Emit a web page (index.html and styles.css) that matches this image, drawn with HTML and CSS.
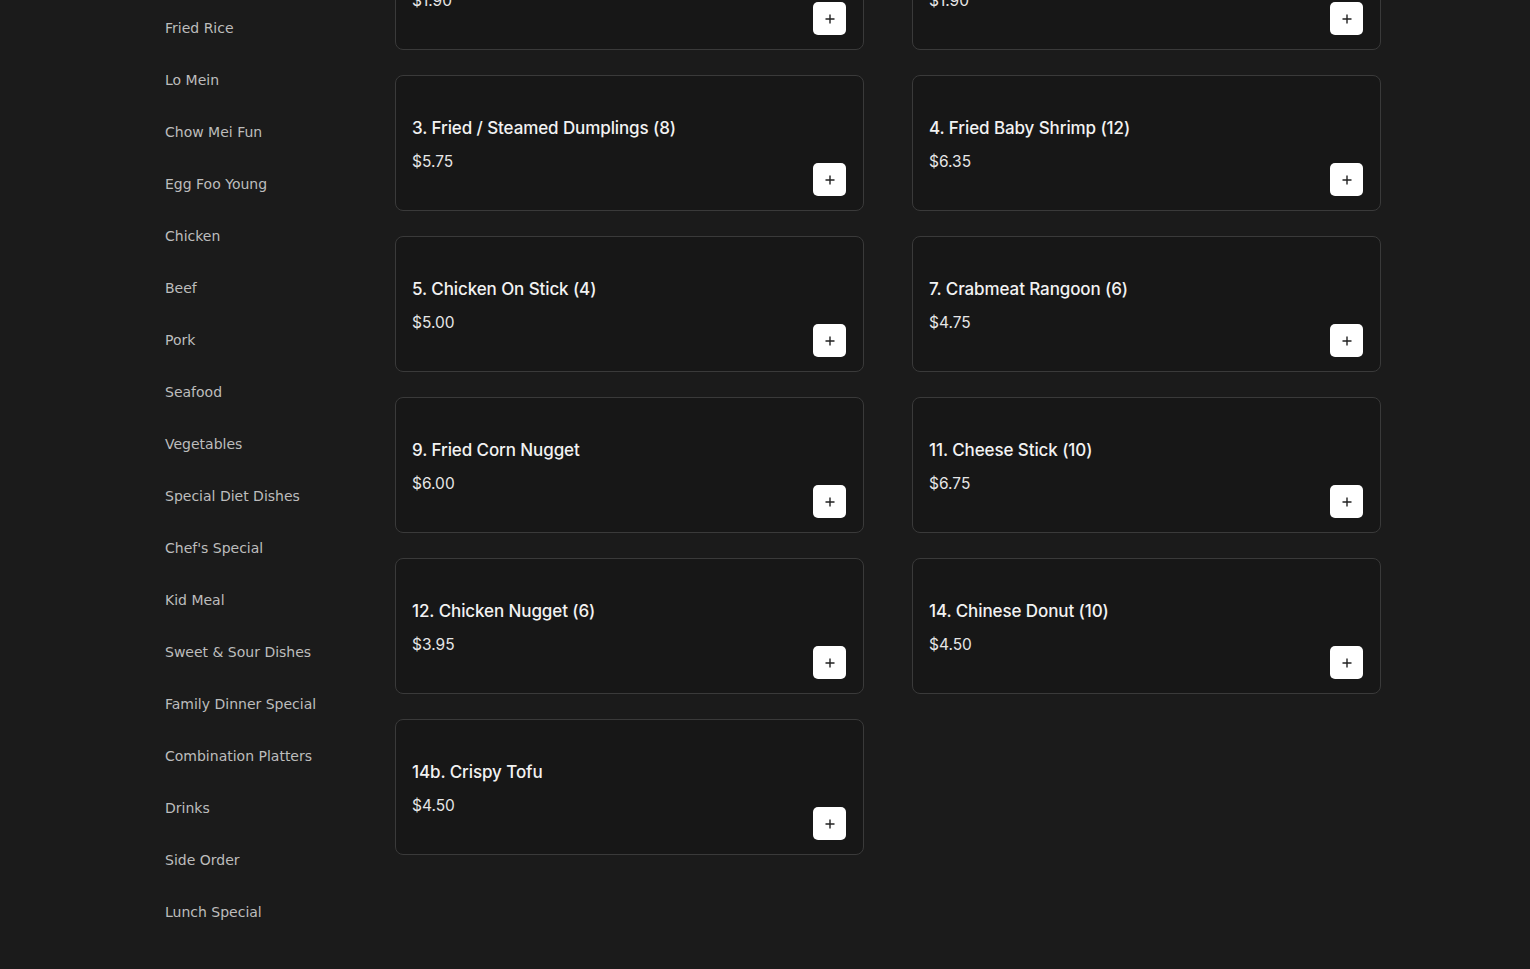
FILE: index.html
```html
<!DOCTYPE html>
<html lang="en">
<head>
  <meta charset="UTF-8">
  <meta name="viewport" content="width=device-width, initial-scale=1.0">
  <title>Menu - Appetizers</title>
  <link rel="stylesheet" href="styles.css">
</head>
<body>
  <div class="layout">
    <aside class="sidebar">
      <a href="#" class="cat">Appetizers</a>
      <a href="#" class="cat">Soup</a>
      <a href="#" class="cat">Fried Rice</a>
      <a href="#" class="cat">Lo Mein</a>
      <a href="#" class="cat">Chow Mei Fun</a>
      <a href="#" class="cat">Egg Foo Young</a>
      <a href="#" class="cat">Chicken</a>
      <a href="#" class="cat">Beef</a>
      <a href="#" class="cat">Pork</a>
      <a href="#" class="cat">Seafood</a>
      <a href="#" class="cat">Vegetables</a>
      <a href="#" class="cat">Special Diet Dishes</a>
      <a href="#" class="cat">Chef's Special</a>
      <a href="#" class="cat">Kid Meal</a>
      <a href="#" class="cat">Sweet &amp; Sour Dishes</a>
      <a href="#" class="cat">Family Dinner Special</a>
      <a href="#" class="cat">Combination Platters</a>
      <a href="#" class="cat">Drinks</a>
      <a href="#" class="cat">Side Order</a>
      <a href="#" class="cat">Lunch Special</a>
    </aside>

    <main class="items">
      <div class="item">
        <h3 class="item-name">1. Egg Roll (1)</h3>
        <p class="item-price">$1.90</p>
        <button class="add-btn"><svg viewBox="0 0 12 12" width="12" height="12"><path d="M6 1.5v9M1.5 6h9" stroke="#222" stroke-width="1.4"/></svg></button>
      </div>
      <div class="item">
        <h3 class="item-name">2. Spring Roll (1)</h3>
        <p class="item-price">$1.90</p>
        <button class="add-btn"><svg viewBox="0 0 12 12" width="12" height="12"><path d="M6 1.5v9M1.5 6h9" stroke="#222" stroke-width="1.4"/></svg></button>
      </div>
      <div class="item">
        <h3 class="item-name">3. Fried / Steamed Dumplings (8)</h3>
        <p class="item-price">$5.75</p>
        <button class="add-btn"><svg viewBox="0 0 12 12" width="12" height="12"><path d="M6 1.5v9M1.5 6h9" stroke="#222" stroke-width="1.4"/></svg></button>
      </div>
      <div class="item">
        <h3 class="item-name">4. Fried Baby Shrimp (12)</h3>
        <p class="item-price">$6.35</p>
        <button class="add-btn"><svg viewBox="0 0 12 12" width="12" height="12"><path d="M6 1.5v9M1.5 6h9" stroke="#222" stroke-width="1.4"/></svg></button>
      </div>
      <div class="item">
        <h3 class="item-name">5. Chicken On Stick (4)</h3>
        <p class="item-price">$5.00</p>
        <button class="add-btn"><svg viewBox="0 0 12 12" width="12" height="12"><path d="M6 1.5v9M1.5 6h9" stroke="#222" stroke-width="1.4"/></svg></button>
      </div>
      <div class="item">
        <h3 class="item-name">7. Crabmeat Rangoon (6)</h3>
        <p class="item-price">$4.75</p>
        <button class="add-btn"><svg viewBox="0 0 12 12" width="12" height="12"><path d="M6 1.5v9M1.5 6h9" stroke="#222" stroke-width="1.4"/></svg></button>
      </div>
      <div class="item">
        <h3 class="item-name">9. Fried Corn Nugget</h3>
        <p class="item-price">$6.00</p>
        <button class="add-btn"><svg viewBox="0 0 12 12" width="12" height="12"><path d="M6 1.5v9M1.5 6h9" stroke="#222" stroke-width="1.4"/></svg></button>
      </div>
      <div class="item">
        <h3 class="item-name">11. Cheese Stick (10)</h3>
        <p class="item-price">$6.75</p>
        <button class="add-btn"><svg viewBox="0 0 12 12" width="12" height="12"><path d="M6 1.5v9M1.5 6h9" stroke="#222" stroke-width="1.4"/></svg></button>
      </div>
      <div class="item">
        <h3 class="item-name">12. Chicken Nugget (6)</h3>
        <p class="item-price">$3.95</p>
        <button class="add-btn"><svg viewBox="0 0 12 12" width="12" height="12"><path d="M6 1.5v9M1.5 6h9" stroke="#222" stroke-width="1.4"/></svg></button>
      </div>
      <div class="item">
        <h3 class="item-name">14. Chinese Donut (10)</h3>
        <p class="item-price">$4.50</p>
        <button class="add-btn"><svg viewBox="0 0 12 12" width="12" height="12"><path d="M6 1.5v9M1.5 6h9" stroke="#222" stroke-width="1.4"/></svg></button>
      </div>
      <div class="item">
        <h3 class="item-name">14b. Crispy Tofu</h3>
        <p class="item-price">$4.50</p>
        <button class="add-btn"><svg viewBox="0 0 12 12" width="12" height="12"><path d="M6 1.5v9M1.5 6h9" stroke="#222" stroke-width="1.4"/></svg></button>
      </div>
    </main>
  </div>
</body>
</html>
```
FILE: styles.css
```css
body {
  margin: 0;
  padding: 0;
  background-color: #1b1b1b;
  font-family: "DejaVu Sans", sans-serif;
  overflow: hidden;
}

.layout {
  width: 1232px;
  margin: -129px auto 0;
  display: grid;
  grid-template-columns: 246px 986px;
}

.sidebar {
  display: flex;
  flex-direction: column;
  padding-top: 27px;
}

.cat {
  display: block;
  padding: 0 16px;
  height: 52px;
  line-height: 52px;
  font-size: 14px;
  color: #bdbdbd;
  text-decoration: none;
}

.items {
  display: grid;
  grid-template-columns: 1fr 1fr;
  column-gap: 48px;
  row-gap: 25px;
  padding-top: 43px;
  align-content: start;
}

.item {
  position: relative;
  height: 136px;
  box-sizing: border-box;
  padding: 41px 16px 16px;
  background-color: #171717;
  border: 1px solid #3a3a3a;
  border-radius: 8px;
  font-family: Inter, "Noto Sans", sans-serif;
  color: #f2f2f2;
}

.item-name {
  margin: 0;
  font-size: 17px;
  font-weight: 500;
  line-height: 22px;
  letter-spacing: -0.1px;
}

.item-price {
  margin: 13px 0 0;
  font-size: 15.5px;
  line-height: 20px;
  color: #e6e6e6;
}

.add-btn {
  position: absolute;
  right: 17px;
  bottom: 14px;
  width: 33px;
  height: 33px;
  padding: 0;
  border: none;
  border-radius: 5px;
  background-color: #fff;
  display: flex;
  align-items: center;
  justify-content: center;
  cursor: pointer;
}
```
